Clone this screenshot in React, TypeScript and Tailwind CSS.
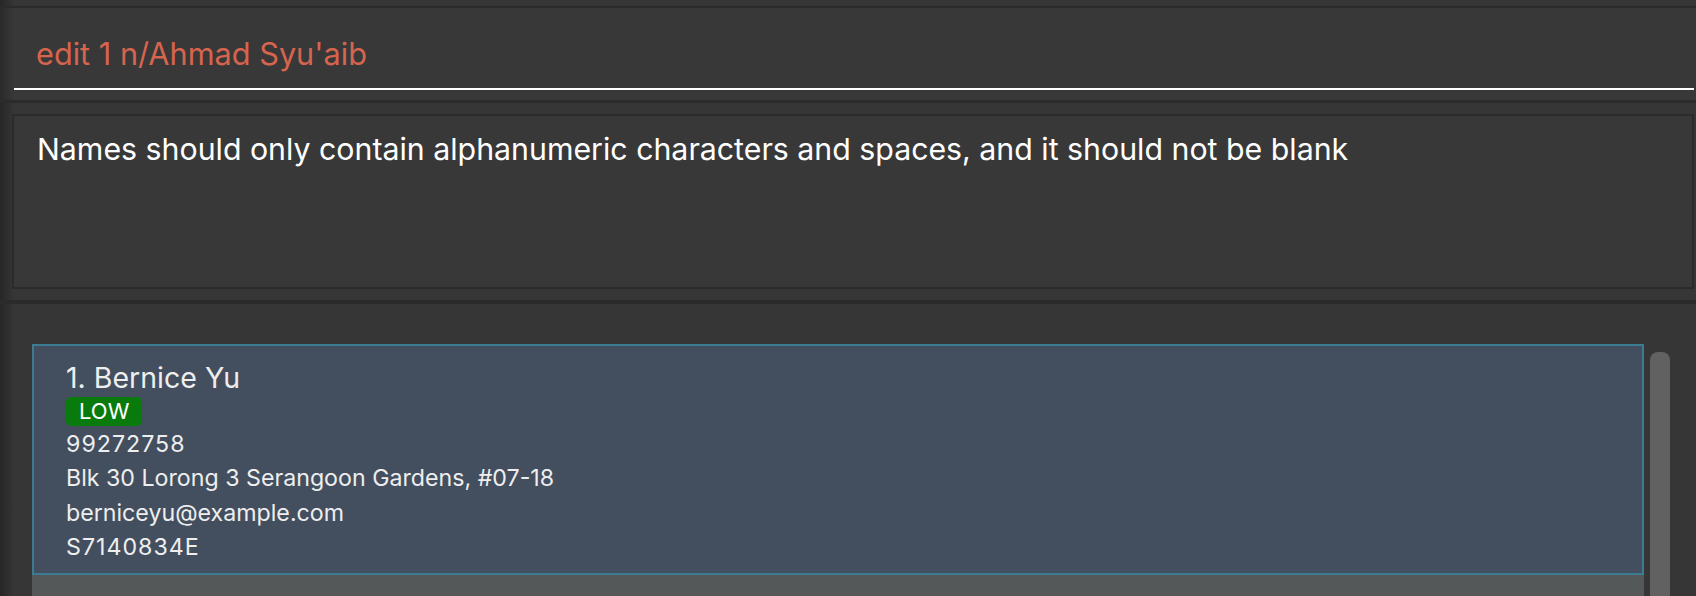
const person = {
  name: "1. Bernice Yu",
  priority: "LOW",
  phone: "99272758",
  address: "Blk 30 Lorong 3 Serangoon Gardens, #07-18",
  email: "berniceyu@example.com",
  nric: "S7140834E",
};

const font = { fontFamily: "Inter, 'Noto Sans', sans-serif" };

const PersonCard = () => {
  return (
    <div className="border-2 border-[#3b7c93] bg-[#434e5f] pl-[32px] pt-[15px] pb-[9px] text-[#eeeeee]">
      <div className="text-[28.5px] leading-[34px]">{person.name}</div>
      <div className="mt-[2px] flex">
        <span className="rounded-[5px] bg-[#087b0c] px-[13px] text-[22px] leading-[29px] text-white">
          {person.priority}
        </span>
      </div>
      <div className="mt-[1px] flex flex-col text-[23.2px] leading-[34.33px]">
        <span className="tracking-[1px]">{person.phone}</span>
        <span>{person.address}</span>
        <span>{person.email}</span>
        <span className="tracking-[1px]">{person.nric}</span>
      </div>
    </div>
  );
};

export default function App() {
  return (
    <div
      className="flex h-[596px] w-full flex-col overflow-hidden bg-[#363636] bg-[linear-gradient(to_right,#262626,#363636_14px)]"
      style={font}
    >
      <div className="h-[6px] shrink-0" />
      <div className="h-[2px] shrink-0 bg-[#2b2b2b]" />

      {/* command box */}
      <div className="h-[92px] shrink-0 bg-[#383838] bg-[linear-gradient(to_right,#2a2a2a,#383838_14px)] pl-[14px] pr-[2px] pt-[28px]">
        <div className="border-b-2 border-white pl-[22px] pb-[16px] text-[30.7px] leading-[36px] text-[#d6644e]">
          edit 1 n/Ahmad Syu'aib
        </div>
      </div>
      <div className="h-[3px] shrink-0 bg-[#2b2b2b]" />

      {/* result display */}
      <div className="h-[197px] shrink-0 pl-[12px] pr-[2px] pt-[11px]">
        <div className="h-[175px] border-2 border-[#2b2b2b] bg-[#383838] pl-[23px] pt-[15px] text-[30.3px] leading-[36px] text-white">
          Names should only contain alphanumeric characters and spaces, and it should not be blank
        </div>
      </div>
      <div className="h-[4px] shrink-0 bg-[#2b2b2b]" />

      {/* person list */}
      <div className="flex flex-1 pl-[32px] pt-[40px]">
        <div className="flex w-[1612px] flex-col">
          <PersonCard />
          <div className="h-[60px] bg-[#545858]" />
        </div>
        <div className="ml-[6px] mt-[8px] h-[400px] w-[20px] rounded-[8px] bg-[#616161]" />
      </div>
    </div>
  );
}
